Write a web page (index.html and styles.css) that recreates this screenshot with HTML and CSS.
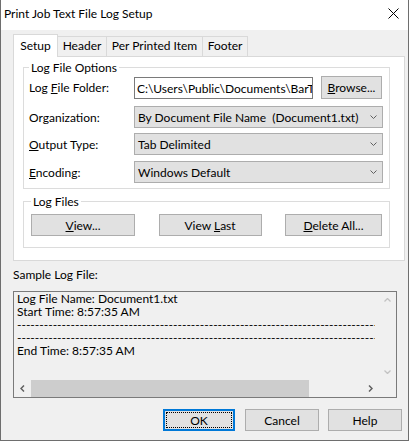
FILE: index.html
```html
<!DOCTYPE html>
<html>
<head>
<meta charset="utf-8">
<title>Print Job Text File Log Setup</title>
<link rel="stylesheet" href="styles.css">
</head>
<body>
<div class="window">
  <div class="titlebar">
    <span class="title">Print Job Text File Log Setup</span>
    <svg class="close" width="11" height="11" viewBox="0 0 11 11"><path d="M0.5 0.5L10.5 10.5M10.5 0.5L0.5 10.5" stroke="#000" stroke-width="1" fill="none"/></svg>
  </div>
  <div class="client">
    <div class="tabs">
      <div class="tab tab-active tab-setup">Setup</div>
      <div class="tab tab-header">Header</div>
      <div class="tab tab-item">Per Printed Item</div>
      <div class="tab tab-footer">Footer</div>
    </div>
    <div class="panel">
      <div class="group">
        <div class="group-title">Log File Options</div>
        <div class="row row-folder">
          <span class="label">Log <u>F</u>ile Folder:</span>
          <div class="textbox"><span class="textbox-value">C:\Users\Public\Documents\BarTender</span></div>
          <div class="btn btn-browse"><span><u>B</u>rowse...</span></div>
        </div>
        <div class="row row-org">
          <span class="label">Or<u>g</u>anization:</span>
          <div class="combo"><span>By Document File Name&nbsp; (Document1.txt)</span><svg class="chev" width="7" height="4" viewBox="0 0 7 4"><path d="M0.5 0.5L3.5 3.5L6.5 0.5" stroke="#606060" fill="none"/></svg></div>
        </div>
        <div class="row row-out">
          <span class="label"><u>O</u>utput Type:</span>
          <div class="combo"><span>Tab Delimited</span><svg class="chev" width="7" height="4" viewBox="0 0 7 4"><path d="M0.5 0.5L3.5 3.5L6.5 0.5" stroke="#606060" fill="none"/></svg></div>
        </div>
        <div class="row row-enc">
          <span class="label"><u>E</u>ncoding:</span>
          <div class="combo"><span>Windows Default</span><svg class="chev" width="7" height="4" viewBox="0 0 7 4"><path d="M0.5 0.5L3.5 3.5L6.5 0.5" stroke="#606060" fill="none"/></svg></div>
        </div>
      </div>
      <div class="group group-files">
        <div class="group-title">Log Files</div>
        <div class="files-row">
          <div class="btn btn-view"><span><u>V</u>iew...</span></div>
          <div class="btn btn-last"><span>View <u>L</u>ast</span></div>
          <div class="btn btn-delete"><span><u>D</u>elete All...</span></div>
        </div>
      </div>
    </div>
    <div class="sample-label">Sample Log File:</div>
    <div class="sample">
      <div class="sample-text">
        <div class="line">Log File Name: Document1.txt</div>
        <div class="line">Start Time: 8:57:35 AM</div>
        <div class="line dashes">----------------------------------------------------------------------------------------------------------------------------------------</div>
        <div class="line dashes">----------------------------------------------------------------------------------------------------------------------------------------</div>
        <div class="line">End Time: 8:57:35 AM</div>
      </div>
      <div class="vscroll">
        <svg width="7" height="4" viewBox="0 0 7 4"><path d="M0.5 3.5L3.5 0.5L6.5 3.5" stroke="#c2c2c2" stroke-width="1.3" fill="none"/></svg>
        <svg width="7" height="4" viewBox="0 0 7 4"><path d="M0.5 0.5L3.5 3.5L6.5 0.5" stroke="#c2c2c2" stroke-width="1.3" fill="none"/></svg>
      </div>
      <div class="hscroll">
        <div class="harrow"><svg width="5" height="7" viewBox="0 0 5 7"><path d="M4 0.5L1 3.5L4 6.5" stroke="#606060" stroke-width="1.5" fill="none"/></svg></div>
        <div class="htrack"><div class="hthumb"></div></div>
        <div class="harrow"><svg width="5" height="7" viewBox="0 0 5 7"><path d="M1 0.5L4 3.5L1 6.5" stroke="#606060" stroke-width="1.5" fill="none"/></svg></div>
      </div>
      <div class="corner"></div>
    </div>
    <div class="buttons">
      <div class="btn btn-ok"><span class="focus">OK</span></div>
      <div class="btn btn-cancel"><span>Cancel</span></div>
      <div class="btn btn-help"><span>Help</span></div>
    </div>
  </div>
</div>
</body>
</html>
```
FILE: styles.css
```css
* { box-sizing: border-box; }
html, body { margin: 0; padding: 0; background: #ffffff; }
body {
  font-family: Lato, "Segoe UI", sans-serif;
  font-size: 12px;
  line-height: 15px;
  color: #000;
}
u { text-underline-offset: 1px; }

.window {
  width: 409px;
  height: 441px;
  border: 1px solid #6e6e6e;
  border-top: none;
  background: #f0f0f0;
  display: flex;
  flex-direction: column;
}

.titlebar {
  height: 30px;
  flex: none;
  background: #fff;
  display: flex;
  align-items: center;
  justify-content: space-between;
  padding: 0 9px 3px 3px;
}
.title { font-size: 12px; }
.close { display: block; }

.client { padding-left: 12px; display: flex; flex-direction: column; }

.tabs {
  display: flex;
  align-items: flex-end;
  margin-top: 4px;
  height: 22px;
}
.tab {
  height: 20px;
  padding-top: 1px;
  text-align: center;
  background: #f0f0f0;
  border: 1px solid #d9d9d9;
  border-bottom: none;
  border-right: none;
  white-space: nowrap;
}
.tab-active {
  position: relative;
  z-index: 2;
  height: 23px;
  padding-top: 3px;
  margin-bottom: -1px;
  background: #fff;
  border-right: 1px solid #d9d9d9;
}
.tab-setup { width: 45px; }
.tab-header { width: 48px; border-left: none; }
.tab-item { width: 96px; }
.tab-footer { width: 46px; border-right: 1px solid #d9d9d9; }

.panel {
  width: 392px;
  background: #fff;
  border: 1px solid #d9d9d9;
  padding: 10px 0 12px 9px;
}

.group {
  width: 367px;
  border: 1px solid #dcdcdc;
  padding: 0 5px 5px 5px;
}
.group-title {
  width: fit-content;
  margin-top: -8px;
  padding: 0 2px;
  background: #fff;
  height: 15px;
}
.row { display: flex; align-items: flex-end; }
.label { width: 105px; flex: none; align-self: center; }
.row-folder { margin-top: 1px; height: 23px; }
.row-org { margin-top: 7px; }
.row-out { margin-top: 5px; }
.row-enc { margin-top: 6px; }

.textbox {
  width: 179px;
  height: 22px;
  flex: none;
  background: #fff;
  border: 1px solid #7a7a7a;
  padding-left: 2px;
  display: flex;
  align-items: center;
}
.textbox-value {
  display: block;
  width: 100%;
  overflow: hidden;
  white-space: nowrap;
}

.btn {
  height: 22px;
  background: #e1e1e1;
  border: 1px solid #adadad;
  display: flex;
  align-items: center;
  justify-content: center;
  white-space: nowrap;
}
.btn-browse { width: 61px; height: 23px; margin-left: 8px; flex: none; }

.combo {
  width: 249px;
  height: 22px;
  background: #e1e1e1;
  border: 1px solid #adadad;
  display: flex;
  align-items: center;
  justify-content: space-between;
  padding: 0 5px 0 3px;
  white-space: nowrap;
}
.chev { display: block; }

.group-files { margin-top: 12px; padding: 0 7px 11px 7px; }
.files-row { margin-top: 5px; display: flex; justify-content: space-between; }
.btn-view { width: 104px; }
.btn-last { width: 103px; }
.btn-delete { width: 97px; }

.sample-label { margin-top: 6px; height: 15px; }

.sample {
  margin-top: 9px;
  width: 384px;
  height: 107px;
  border: 1px solid #7a7a7a;
  background: #f0f0f0;
  display: grid;
  grid-template-columns: 1fr 17px;
  grid-template-rows: 1fr 17px;
}
.sample-text {
  padding: 0 0 0 3px;
  line-height: 13px;
  overflow: hidden;
  white-space: nowrap;
}
.dashes { width: 358px; overflow: hidden; }
.vscroll {
  background: #f0f0f0;
  display: flex;
  flex-direction: column;
  justify-content: space-between;
  align-items: center;
  padding: 6px 0 6px 0;
}
.vscroll svg { display: block; }
.hscroll { display: flex; background: #f0f0f0; }
.harrow { width: 17px; flex: none; display: flex; align-items: center; justify-content: center; }
.harrow svg { display: block; }
.htrack { flex: 1; display: flex; }
.hthumb { width: 278px; background: #cdcdcd; }
.corner { background: #f0f0f0; }

.buttons {
  margin-top: 11px;
  display: flex;
  padding-left: 150px;
}
.btn-ok {
  width: 72px;
  border: 2px solid #0078d7;
  padding: 1px;
  align-items: stretch;
}
.focus {
  flex: 1;
  border: 1px dotted #000;
  display: flex;
  align-items: center;
  justify-content: center;
}
.btn-cancel { width: 74px; margin-left: 10px; }
.btn-help { width: 74px; margin-left: 9px; }
```
